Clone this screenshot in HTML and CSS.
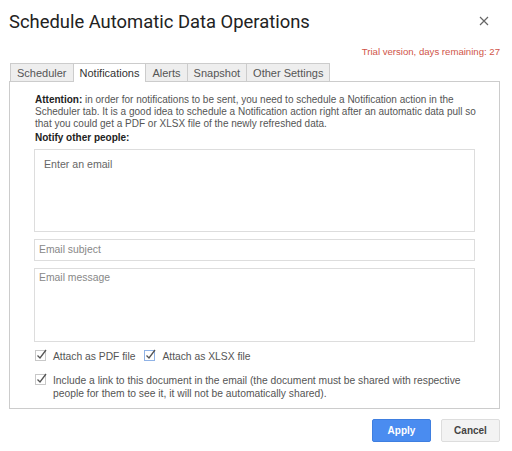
FILE: index.html
```html
<!DOCTYPE html>
<html lang="en">
<head>
    <meta charset="UTF-8">
    <title>Schedule Automatic Data Operations</title>
    <link rel="stylesheet" href="styles.css">
</head>
<body>
    <div class="dialog">
        <div class="header">
            <h1 class="title">Schedule Automatic Data Operations</h1>
            <span class="close">
                <svg width="10" height="10" viewBox="0 0 10 10"><path d="M1 1L9 9M9 1L1 9" stroke="#666" stroke-width="1.2"/></svg>
            </span>
        </div>
        <div class="trial">Trial version, days remaining: 27</div>

        <ul class="tabs">
            <li>Scheduler</li>
            <li class="tab-selected">Notifications</li>
            <li>Alerts</li>
            <li>Snapshot</li>
            <li>Other Settings</li>
        </ul>

        <div class="panel">
            <p class="note"><b>Attention:</b> in order for notifications to be sent, you need to schedule a Notification action in the Scheduler tab. It is a good idea to schedule a Notification action right after an automatic data pull so that you could get a PDF or XLSX file of the newly refreshed data.</p>
            <div class="label">Notify other people:</div>
            <div class="field emails">Enter an email</div>
            <div class="field subject">Email subject</div>
            <div class="field message">Email message</div>

            <div class="checks">
                <label class="check"><span class="box"><svg width="13" height="13" viewBox="0 0 13 13"><rect x="0.5" y="2.5" width="10" height="10" fill="#fff" stroke="#c8c8c8"/><path d="M2.5 7.5L5 10L11 2" fill="none" stroke="#555" stroke-width="1.3"/></svg></span>Attach as PDF file</label>
                <label class="check"><span class="box"><svg width="13" height="13" viewBox="0 0 13 13"><rect x="0.5" y="2.5" width="10" height="10" fill="#fff" stroke="#8fb2e6"/><path d="M2.5 7.5L5 10L11 2" fill="none" stroke="#555" stroke-width="1.3"/></svg></span>Attach as XLSX file</label>
            </div>
            <label class="check wide"><span class="box"><svg width="13" height="13" viewBox="0 0 13 13"><rect x="0.5" y="2.5" width="10" height="10" fill="#fff" stroke="#c8c8c8"/><path d="M2.5 7.5L5 10L11 2" fill="none" stroke="#555" stroke-width="1.3"/></svg></span><span>Include a link to this document in the email (the document must be shared with respective people for them to see it, it will not be automatically shared).</span></label>
        </div>

        <div class="buttons">
            <button class="btn apply">Apply</button>
            <button class="btn cancel">Cancel</button>
        </div>
    </div>
</body>
</html>
```

FILE: styles.css
```css
*{
    margin: 0;
    padding: 0;
    box-sizing: border-box;
}
body{
    background: #fff;
    font-family: "Liberation Sans", Arial, sans-serif;
    color: #333;
}
.dialog{
    width: 512px;
    padding: 6px 12px 0 9px;
}
.header{
    display: flex;
    justify-content: space-between;
    align-items: center;
    height: 30px;
}
.title{
    font-family: Roboto, "Open Sans", sans-serif;
    font-weight: 400;
    font-size: 18.4px;
    color: #222;
}
.close{
    display: flex;
    margin-right: 11px;
}
.trial{
    text-align: right;
    font-size: 9.6px;
    color: #d0554a;
    margin-top: 10px;
    height: 13px;
}
.tabs{
    display: flex;
    list-style: none;
    margin: 4px 0 0 1px;
    height: 18px;
}
.tabs li{
    font-size: 11px;
    color: #555;
    background: #eee;
    border: 1px solid #ccc;
    border-bottom: none;
    margin-right: -1px;
    padding: 2px 6px 0;
    line-height: 15px;
}
.tabs .tab-selected{
    background: #fff;
    color: #333;
    position: relative;
    z-index: 1;
    height: 19px;
}
.panel{
    border: 1px solid #ccc;
    padding: 12px 24px 12px 25px;
    height: 328px;
}
.note{
    font-size: 10px;
    line-height: 12px;
    color: #555;
    margin-right: -8px;
}
.note b{
    color: #222;
}
.label{
    font-size: 10px;
    font-weight: bold;
    color: #222;
    margin-top: 1px;
    line-height: 14px;
}
.field{
    border: 1px solid #ddd;
    color: #888;
    margin-left: -1px;
}
.emails{
    height: 83px;
    margin-top: 4px;
    padding: 8px 9px;
    font-size: 10.6px;
    color: #666;
}
.subject{
    height: 22px;
    margin-top: 7px;
    padding: 4px 4px;
    font-size: 10.4px;
}
.message{
    height: 74px;
    margin-top: 7px;
    padding: 3px 4px;
    font-size: 10.4px;
}
.checks{
    display: flex;
    margin-top: 8px;
}
.check{
    display: flex;
    align-items: flex-start;
    font-size: 10.3px;
    color: #555;
    line-height: 13px;
    margin-right: 9px;
}
.box{
    display: flex;
    margin-right: 5px;
    margin-top: -2px;
}
.wide{
    margin-top: 11px;
    margin-right: 0;
}
.buttons{
    display: flex;
    justify-content: flex-end;
    margin-top: 10px;
    gap: 10px;
}
.btn{
    width: 59px;
    height: 23px;
    font-family: "Liberation Sans", Arial, sans-serif;
    font-size: 10px;
    font-weight: bold;
    border-radius: 2px;
}
.apply{
    background: #4a8cf0;
    border: 1px solid #3f7fe0;
    color: #fff;
}
.cancel{
    background: #f3f3f3;
    border: 1px solid #ddd;
    color: #444;
}
```
